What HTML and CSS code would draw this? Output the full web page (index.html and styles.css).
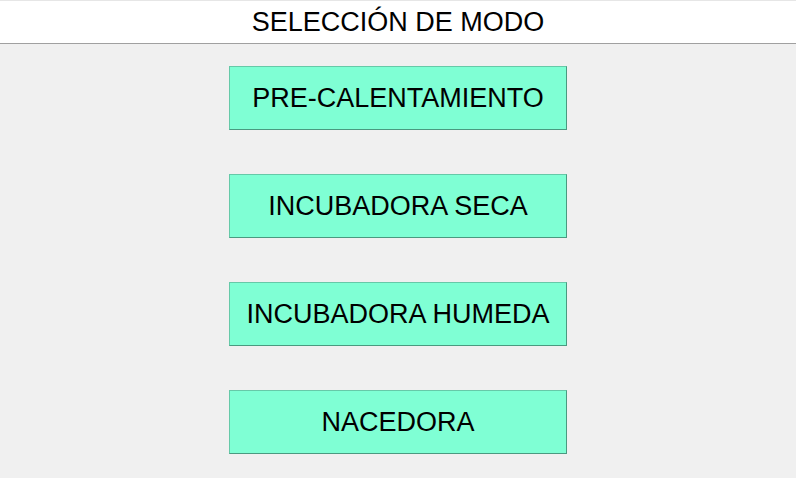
FILE: index.html
```html
<!DOCTYPE html>
<html lang="es">
<head>
    <meta charset="UTF-8">
    <title>Selección de modo</title>
    <link rel="stylesheet" href="styles.css">
</head>
<body>
    <div class="header">SELECCIÓN DE MODO</div>
    <div class="modes">
        <button class="mode">PRE-CALENTAMIENTO</button>
        <button class="mode">INCUBADORA SECA</button>
        <button class="mode">INCUBADORA HUMEDA</button>
        <button class="mode">NACEDORA</button>
    </div>
</body>
</html>
```
FILE: styles.css
```css
body{
    margin: 0;
    padding: 0;
    height: 478px;
    overflow: hidden;
    font-family: "Liberation Sans", Arial, sans-serif;
    background-color: #f0f0f0;
    color: #000;
}
.header{
    height: 44px;
    line-height: 42px;
    background: #fff;
    border-top: 1px solid #e6e6e6;
    border-bottom: 1px solid #a0a0a0;
    text-align: center;
    font-size: 27px;
    box-sizing: border-box;
}
.modes{
    display: flex;
    flex-direction: column;
    align-items: center;
    gap: 44px;
    padding-top: 22px;
}
.mode{
    width: 338px;
    height: 64px;
    background: #7fffd4;
    border: 1px solid #66c9a8;
    border-right-color: #4a9a80;
    border-bottom-color: #4a9a80;
    font-family: "Liberation Sans", Arial, sans-serif;
    font-size: 27px;
    color: #000;
    padding: 0;
}
```
